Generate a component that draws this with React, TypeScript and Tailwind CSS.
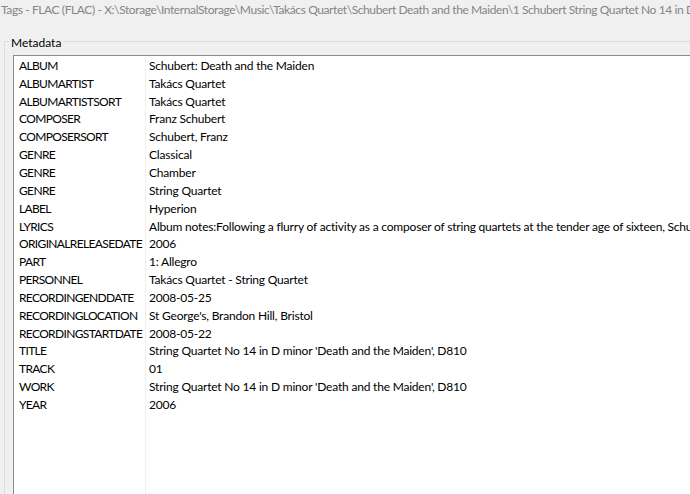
import React from "react";

const rows: [string, string][] = [
  ["ALBUM", "Schubert: Death and the Maiden"],
  ["ALBUMARTIST", "Takács Quartet"],
  ["ALBUMARTISTSORT", "Takács Quartet"],
  ["COMPOSER", "Franz Schubert"],
  ["COMPOSERSORT", "Schubert, Franz"],
  ["GENRE", "Classical"],
  ["GENRE", "Chamber"],
  ["GENRE", "String Quartet"],
  ["LABEL", "Hyperion"],
  ["LYRICS", "Album notes:Following a flurry of activity as a composer of string quartets at the tender age of sixteen, Schubert"],
  ["ORIGINALRELEASEDATE", "2006"],
  ["PART", "1: Allegro"],
  ["PERSONNEL", "Takács Quartet - String Quartet"],
  ["RECORDINGENDDATE", "2008-05-25"],
  ["RECORDINGLOCATION", "St George's, Brandon Hill, Bristol"],
  ["RECORDINGSTARTDATE", "2008-05-22"],
  ["TITLE", "String Quartet No 14 in D minor 'Death and the Maiden', D810"],
  ["TRACK", "01"],
  ["WORK", "String Quartet No 14 in D minor 'Death and the Maiden', D810"],
  ["YEAR", "2006"],
];

export default function App() {
  return (
    <div
      className="w-[690px] h-[494px] overflow-hidden bg-[#f0f0f0] text-[12px] leading-none"
      style={{ fontFamily: 'Lato, "Noto Sans", sans-serif' }}
    >
      <div className="h-[21px] pl-[1px] pt-[4px] whitespace-nowrap text-[#858585] overflow-hidden tracking-[-0.4px]">
        Tags - FLAC (FLAC) - X:\Storage\InternalStorage\Music\Takács Quartet\Schubert Death and the Maiden\1 Schubert String Quartet No 14 in D minor
      </div>
      <div className="ml-[4px] mt-[20px] w-[720px] h-[500px] border-l border-t border-[#dcdcdc] relative">
        <div className="absolute left-[4px] top-[-5px] px-[2px] bg-[#f0f0f0] text-black">Metadata</div>
        <div className="ml-[8px] mt-[13px] w-[700px] h-[480px] border-l border-t border-[#8c8c8c] bg-white flex">
          <div className="w-[132px] border-r border-[#f0f0f0] pt-[1px]">
            {rows.map(([k], i) => (
              <div key={i} className="h-[17.85px] flex items-center pl-[5px] whitespace-nowrap text-black tracking-[-0.65px]">
                {k}
              </div>
            ))}
          </div>
          <div className="flex-1 pt-[1px] overflow-hidden">
            {rows.map(([, v], i) => (
              <div key={i} className="h-[17.85px] flex items-center pl-[3px] whitespace-nowrap text-black tracking-[-0.2px]">
                {v}
              </div>
            ))}
          </div>
        </div>
      </div>
    </div>
  );
}
